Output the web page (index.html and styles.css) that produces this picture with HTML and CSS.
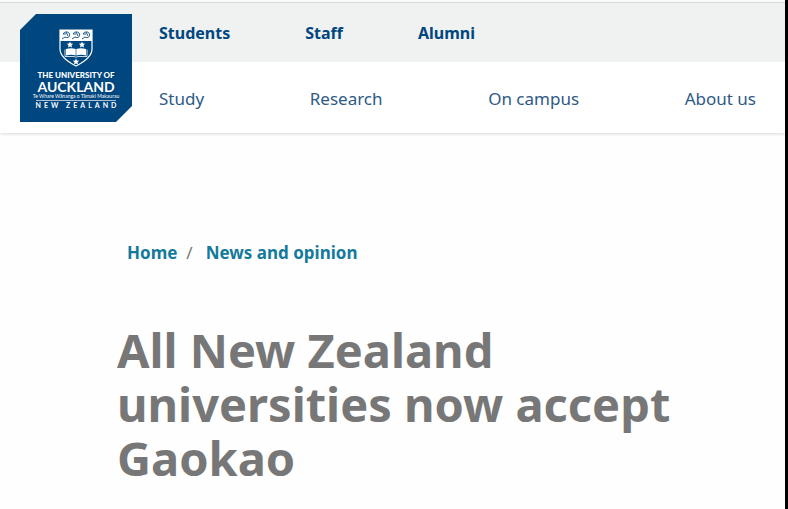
FILE: index.html
```html
<!DOCTYPE html>
<html lang="en">
<head>
    <meta charset="UTF-8">
    <meta name="viewport" content="width=device-width, initial-scale=1.0">
    <title>All New Zealand universities now accept Gaokao</title>
    <link rel="stylesheet" href="styles.css">
</head>
<body>
    <header class="site-header">
        <a class="logo" href="#" aria-label="The University of Auckland home">
            <svg class="crest" viewBox="0 0 34 38" aria-hidden="true">
                <path d="M1 1H33V20C33 28 25 33 17 37C9 33 1 28 1 20Z" fill="#00467f" stroke="#fff" stroke-width="1.2"/>
                <path d="M1 1H33V12H1Z" fill="#fff"/>
                <g fill="none" stroke="#00467f" stroke-width="0.9">
                    <path d="M3 10L6 8C9 10 12 7 10 4C8 2 5 3 4 5L7 5M7 3L9 7"/>
                    <path d="M13 10L16 8C19 10 22 7 20 4C18 2 15 3 14 5L17 5M17 3L19 7"/>
                    <path d="M23 10L26 8C29 10 32 7 30 4C28 2 25 3 24 5L27 5M27 3L29 7"/>
                </g>
                <g fill="#fff">
                    <path id="star" d="M11 12.500L11.900 14.600L14.200 14.800L12.500 16.300L13 18.600L11 17.400L9 18.600L9.500 16.300L7.800 14.800L10.100 14.600Z"/>
                    <use href="#star" x="12"/>
                    <use href="#star" x="6" y="17"/>
                    <path d="M7 20C10 19 14 19 16.700 20V26.500C14 25.500 10 25.500 7 26.500ZM27 20C24 19 20 19 17.300 20V26.500C20 25.500 24 25.500 27 26.500Z"/>
                    <path d="M6 20.500V27.500H15L17 28.200L19 27.500H28V20.500" fill="none" stroke="#fff" stroke-width="0.800"/>
                </g>
            </svg>
            <span class="logo-university">THE UNIVERSITY OF</span>
            <span class="logo-name">AUCKLAND</span>
            <span class="logo-maori">Te Whare Wānanga o Tāmaki Makaurau</span>
            <span class="logo-country">NEW ZEALAND</span>
        </a>
        <nav class="top-nav" aria-label="Audience">
            <a href="#">Students</a>
            <a href="#">Staff</a>
            <a href="#">Alumni</a>
        </nav>
        <nav class="main-nav" aria-label="Main">
            <a href="#">Study</a>
            <a href="#">Research</a>
            <a href="#">On campus</a>
            <a href="#">About us</a>
        </nav>
    </header>

    <main class="content">
        <nav class="breadcrumb" aria-label="Breadcrumb">
            <a href="#">Home</a>
            <span class="separator">/</span>
            <a href="#">News and opinion</a>
        </nav>
        <h1>All New Zealand universities now accept Gaokao</h1>
    </main>
</body>
</html>
```

FILE: styles.css
```css
* {
    margin: 0;
    padding: 0;
    box-sizing: border-box;
}

body {
    min-height: 100vh;
    padding-top: 2px;
    background: #fefefe;
    border-right: 3px solid #000;
    font-family: "Noto Sans", "Open Sans", sans-serif;
}

a {
    text-decoration: none;
}

.site-header {
    position: relative;
    background: #fff;
    box-shadow: 0 1px 3px rgba(0, 0, 0, 0.15);
}

.top-nav,
.main-nav {
    display: flex;
    align-items: center;
    padding-left: 159px;
    line-height: 24px;
}

.top-nav {
    gap: 75px;
    height: 60px;
    background: #f0f1f1;
    border-top: 1px solid #d8dbd9;
    font-size: 16px;
}

.main-nav {
    justify-content: space-between;
    height: 71px;
    padding-right: 29px;
    padding-top: 2px;
    font-size: 17px;
}

.top-nav a {
    color: #00467f;
    font-weight: 700;
}

.main-nav a {
    color: #2d5a86;
}

/* Logo hangs over both navigation bars */
.logo {
    position: absolute;
    top: 12px;
    left: 20px;
    width: 112px;
    height: 108px;
    padding-top: 15px;
    display: flex;
    flex-direction: column;
    align-items: center;
    background: #00467f;
    clip-path: polygon(16px 0, 100% 0, 100% 92px, 96px 100%, 0 100%, 0 16px);
    color: #fff;
    font-family: Lato, sans-serif;
    white-space: nowrap;
}

.crest {
    width: 34px;
    height: 38px;
    margin-bottom: 3px;
}

.logo-university {
    font-size: 8px;
    font-weight: 900;
    line-height: 11px;
}

.logo-name {
    font-size: 14px;
    font-weight: 700;
    line-height: 12px;
}

.logo-maori {
    width: 80px;
    display: flex;
    justify-content: center;
    padding-bottom: 1px;
    border-bottom: 1px solid #a9c3da;
    font-size: 5px;
    line-height: 6px;
}

.logo-country {
    padding-left: 3px;
    font-size: 7px;
    font-weight: 700;
    line-height: 8px;
    letter-spacing: 3px;
}

.content {
    padding: 108px 100px 24px 117px;
}

.breadcrumb {
    display: flex;
    gap: 9px;
    padding-left: 10px;
    font-size: 17px;
    line-height: 24px;
}

.breadcrumb a {
    color: #147a9c;
    font-weight: 700;
}

.separator {
    margin-right: 4px;
    color: #777;
}

h1 {
    margin-top: 58px;
    color: #777;
    font-size: 47px;
    font-weight: 700;
    line-height: 54px;
}
```
